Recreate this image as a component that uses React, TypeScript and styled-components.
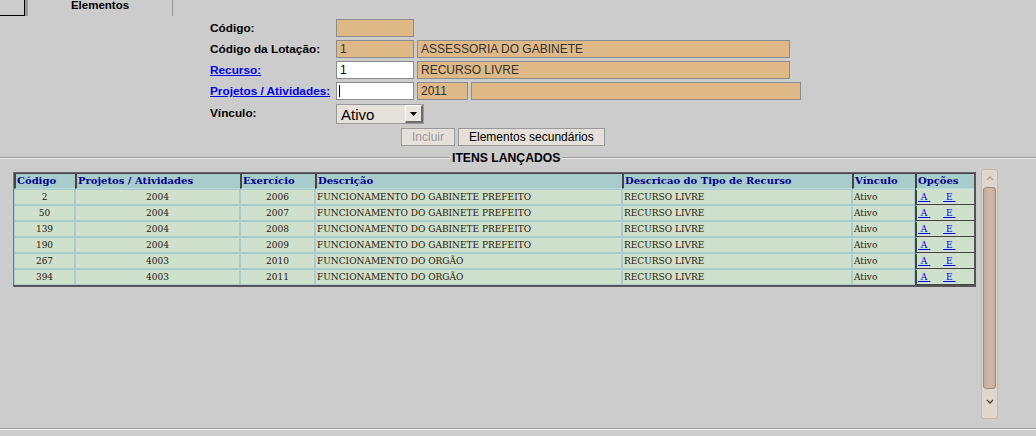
import styled, { createGlobalStyle } from "styled-components"

const GlobalStyle = createGlobalStyle`
  html, body {
    margin: 0;
    padding: 0;
    background: #cccccc;
    overflow: hidden;
  }
  body {
    width: 1036px;
    height: 436px;
    font-family: "Liberation Sans", Arial, sans-serif;
  }
`

const TabBar = styled.div`
  display: flex;
  height: 16px;
`

const TabStub = styled.div`
  width: 24px;
  height: 15px;
  border-bottom: 1px solid #000;
  border-right: 1px solid #000;
  box-shadow: 3px 0 0 #999;
`

const Tab = styled.div`
  margin-left: 3px;
  width: 144px;
  height: 16px;
  border-right: 1px solid #999;
  font-size: 11.5px;
  font-weight: bold;
  color: #000;
  text-align: center;
  line-height: 10px;
`

const Form = styled.div`
  display: grid;
  grid-template-columns: 126px auto;
  row-gap: 3px;
  margin: 3px 0 0 210px;
`

const Label = styled.div<{ $tall?: boolean }>`
  font-size: 11.8px;
  font-weight: bold;
  color: #000;
  display: flex;
  align-items: center;
  height: ${p => (p.$tall ? 20 : 18)}px;
`

const LinkLabel = styled.a`
  color: #0000ee;
  text-decoration: underline;
`

const Fields = styled.div`
  display: flex;
  gap: 3px;
  align-items: center;
`

const Field = styled.div<{ $w: number; $editable?: boolean }>`
  position: relative;
  box-sizing: border-box;
  width: ${p => p.$w}px;
  height: 18px;
  border: 1px solid #8c8c8c;
  background: ${p => (p.$editable ? "#ffffff" : "#deb887")};
  color: ${p => (p.$editable ? "#000" : "#333")};
  font-size: 12px;
  line-height: 16px;
  padding-left: 3px;
  white-space: nowrap;
  overflow: hidden;
`

const Caret = styled.span`
  position: absolute;
  left: 2px;
  top: 2px;
  width: 1px;
  height: 12px;
  background: #000;
`

const SelectBox = styled.div`
  box-sizing: border-box;
  width: 88px;
  height: 20px;
  margin-top: 1px;
  border: 1px solid #9a9a9a;
  background: #e7e1db;
  display: flex;
  align-items: center;
  justify-content: space-between;
  font-size: 15px;
  color: #000;
  padding-left: 4px;
`

const SelectButton = styled.div`
  box-sizing: border-box;
  width: 18px;
  height: 18px;
  background: #ebe5df;
  border-left: 1px solid #fff;
  border-top: 1px solid #fff;
  border-right: 2px solid #6c6c6c;
  border-bottom: 2px solid #6c6c6c;
  display: flex;
  align-items: center;
  justify-content: center;
`

const ButtonRow = styled.div`
  display: flex;
  gap: 3px;
  padding-left: 401px;
  margin-top: 4px;
`

const Button = styled.button<{ $disabled?: boolean }>`
  box-sizing: border-box;
  height: 18px;
  padding: 0 10px;
  border: 1px solid #999;
  background: #e6e0da;
  color: ${p => (p.$disabled ? "#a09a96" : "#000")};
  font-family: "Liberation Sans", Arial, sans-serif;
  font-size: 12px;
  line-height: 14px;
`

const Fieldset = styled.fieldset`
  margin: 5px 0 0 0;
  padding: 7px 0 9px 13px;
  border: none;
  border-top: 2px groove #f0f0f0;
  border-bottom: 2px groove #f0f0f0;
  min-width: 0;
`

const Legend = styled.legend`
  margin-left: 437px;
  padding: 0 2px;
  font-size: 12.2px;
  font-weight: bold;
  color: #000;
`

const Panel = styled.div`
  display: flex;
  gap: 5px;
  height: 250px;
  margin-top: -3px;
`

const TableWrap = styled.div`
  padding-top: 3px;
  width: 963px;
  flex: none;
`

const Table = styled.table`
  box-sizing: border-box;
  width: 963px;
  table-layout: fixed;
  border-collapse: separate;
  border-spacing: 0;
  background: #a8cccc;
  border-top: 1px solid #666;
  border-left: 1px solid #777;
  border-right: 2px solid #555;
  border-bottom: 2px solid #555;
  font-family: "DejaVu Serif", "Liberation Serif", serif;
  font-size: 10px;
`

const Th = styled.th<{ $w: number }>`
  box-sizing: border-box;
  width: ${p => p.$w}px;
  height: 16px;
  padding: 0 1px;
  background: #a8cccc;
  color: #00008b;
  font-weight: bold;
  text-align: left;
  border-top: 1px solid #444;
  border-left: 2px solid #444;
  border-bottom: 1px solid #b8dada;
  white-space: nowrap;
  overflow: hidden;
  line-height: 14px;
`

const Td = styled.td<{ $center?: boolean }>`
  height: 14px;
  padding: 0 1px;
  background: #cfe0cc;
  color: #2b1608;
  font-stretch: condensed;
  text-align: ${p => (p.$center ? "center" : "left")};
  border: 1px solid #a8cccc;
  white-space: nowrap;
  overflow: hidden;
  line-height: 14px;
`

const OptTd = styled.td`
  height: 14px;
  padding: 0 1px;
  background: #cfe0cc;
  font-stretch: condensed;
  border-left: 2px solid #444;
  border-bottom: 1px solid #444;
  border-top: 1px solid #cfe0cc;
  white-space: nowrap;
  line-height: 14px;
`

const OptLink = styled.a`
  color: #0000ee;
  text-decoration: underline;
  margin-right: 13px;
`

const Scrollbar = styled.div`
  box-sizing: border-box;
  width: 17px;
  height: 250px;
  flex: none;
  border: 1px solid #cbb9a8;
  border-radius: 3px;
  background: #e1d6cb;
  display: flex;
  flex-direction: column;
  align-items: center;
`

const Arrow = styled.div`
  height: 17px;
  display: flex;
  align-items: center;
  justify-content: center;
`

const Thumb = styled.div`
  box-sizing: border-box;
  width: 13px;
  height: 202px;
  border: 1px solid #a08c7c;
  border-radius: 3px;
  background: linear-gradient(to right, #c2ad9c, #cdbaa9 60%, #c2ad9c);
`

const Spacer = styled.div<{ $h?: number }>`
  flex: ${p => (p.$h ? "none" : 1)};
  height: ${p => p.$h ?? 0}px;
`

const rows = [
  ["2", "2004", "2006", "FUNCIONAMENTO DO GABINETE PREFEITO"],
  ["50", "2004", "2007", "FUNCIONAMENTO DO GABINETE PREFEITO"],
  ["139", "2004", "2008", "FUNCIONAMENTO DO GABINETE PREFEITO"],
  ["190", "2004", "2009", "FUNCIONAMENTO DO GABINETE PREFEITO"],
  ["267", "4003", "2010", "FUNCIONAMENTO DO ORGÃO"],
  ["394", "4003", "2011", "FUNCIONAMENTO DO ORGÃO"]
]

export default function App() {
  return (
    <>
      <GlobalStyle />
      <TabBar>
        <TabStub />
        <Tab>Elementos</Tab>
      </TabBar>

      <Form>
        <Label>Código:</Label>
        <Fields>
          <Field $w={78} />
        </Fields>

        <Label>Código da Lotação:</Label>
        <Fields>
          <Field $w={78}>1</Field>
          <Field $w={373}>ASSESSORIA DO GABINETE</Field>
        </Fields>

        <Label>
          <LinkLabel href="#">Recurso:</LinkLabel>
        </Label>
        <Fields>
          <Field $w={78} $editable>
            1
          </Field>
          <Field $w={373}>RECURSO LIVRE</Field>
        </Fields>

        <Label>
          <LinkLabel href="#">Projetos / Atividades:</LinkLabel>
        </Label>
        <Fields>
          <Field $w={78} $editable>
            <Caret />
          </Field>
          <Field $w={51}>2011</Field>
          <Field $w={330} />
        </Fields>

        <Label $tall>Vínculo:</Label>
        <Fields>
          <SelectBox>
            Ativo
            <SelectButton>
              <svg width="7" height="4" viewBox="0 0 7 4">
                <path d="M0 0 H7 L3.5 4 Z" fill="#000" />
              </svg>
            </SelectButton>
          </SelectBox>
        </Fields>
      </Form>

      <ButtonRow>
        <Button $disabled>Incluir</Button>
        <Button>Elementos secundários</Button>
      </ButtonRow>

      <Fieldset>
        <Legend>ITENS LANÇADOS</Legend>
        <Panel>
          <TableWrap>
            <Table>
              <thead>
                <tr>
                  <Th $w={61}>Código</Th>
                  <Th $w={165}>Projetos / Atividades</Th>
                  <Th $w={75}>Exercício</Th>
                  <Th $w={307}>Descrição</Th>
                  <Th $w={230}>Descricao do Tipo de Recurso</Th>
                  <Th $w={63}>Vínculo</Th>
                  <Th $w={59}>Opções</Th>
                </tr>
              </thead>
              <tbody>
                {rows.map((r, i) => (
                  <tr key={i}>
                    <Td $center>{r[0]}</Td>
                    <Td $center>{r[1]}</Td>
                    <Td $center>{r[2]}</Td>
                    <Td>{r[3]}</Td>
                    <Td>RECURSO LIVRE</Td>
                    <Td>Ativo</Td>
                    <OptTd>
                      <OptLink href="#">{"\u00a0A\u00a0"}</OptLink>
                      <OptLink href="#">{"\u00a0E\u00a0"}</OptLink>
                    </OptTd>
                  </tr>
                ))}
              </tbody>
            </Table>
          </TableWrap>
          <Scrollbar>
            <Arrow>
              <svg width="8" height="5" viewBox="0 0 8 5">
                <path d="M1 4 L4 1 L7 4" stroke="#b0a498" strokeWidth="1.3" fill="none" />
              </svg>
            </Arrow>
            <Thumb />
            <Spacer />
            <Arrow>
              <svg width="8" height="5" viewBox="0 0 8 5">
                <path d="M1 1 L4 4 L7 1" stroke="#4a4038" strokeWidth="1.3" fill="none" />
              </svg>
            </Arrow>
            <Spacer $h={8} />
          </Scrollbar>
        </Panel>
      </Fieldset>
    </>
  )
}
